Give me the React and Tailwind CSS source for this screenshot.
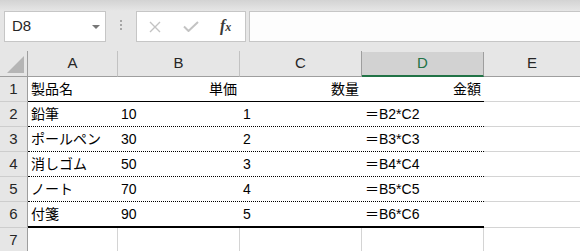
import React from 'react';

const rows = [
    { n: 1, a: '製品名', b: '単価', c: '数量', d: '金額', head: true, border: 'border-b border-black' },
    { n: 2, a: '鉛筆', b: '10', c: '1', d: '＝B2*C2', border: 'border-b border-dotted border-black' },
    { n: 3, a: 'ポールペン', b: '30', c: '2', d: '＝B3*C3', border: 'border-b border-dotted border-black' },
    { n: 4, a: '消しゴム', b: '50', c: '3', d: '＝B4*C4', border: 'border-b border-dotted border-black' },
    { n: 5, a: 'ノート', b: '70', c: '4', d: '＝B5*C5', border: 'border-b border-dotted border-black' },
    { n: 6, a: '付箋', b: '90', c: '5', d: '＝B6*C6', border: 'border-b-2 border-black', tall: true },
];

function RowHead({ n, tall }) {
    return (
        <div className={`flex w-[28px] shrink-0 items-center justify-center border-r border-b border-r-[#9e9e9e] border-b-[#cdcdcd] bg-[#e6e6e6] text-[15px] text-[#262626] ${tall ? 'h-[26px]' : 'h-[25px]'}`}>
            {n}
        </div>
    );
}

export default function App() {
    return (
        <div
            className="h-[251px] w-[580px] overflow-hidden bg-[#e6e6e6] text-black"
            style={{ fontFamily: '"Liberation Sans", "Noto Sans CJK JP", sans-serif' }}
        >
            {/* Formula bar */}
            <div className="flex h-[51px] items-start bg-[linear-gradient(to_bottom,#d3d3d3_0px,#e6e6e6_11px)] pl-[4px] pt-[11px]">
                <div className="flex h-[31px] w-[102px] items-center justify-between border border-[#c6c6c6] bg-white pl-[7px] pr-[5px]">
                    <span className="text-[15px] text-[#262626]">D8</span>
                    <svg width="8" height="4" viewBox="0 0 8 4">
                        <polygon points="0,0 8,0 4,4" fill="#777" />
                    </svg>
                </div>
                <div className="flex w-[30px] flex-col items-center gap-[2px] pt-[9px]">
                    <span className="h-[2px] w-[2px] bg-[#a6a6a6]" />
                    <span className="h-[2px] w-[2px] bg-[#a6a6a6]" />
                    <span className="h-[2px] w-[2px] bg-[#a6a6a6]" />
                </div>
                <div className="flex h-[31px] w-[110px] items-center border border-[#c6c6c6] bg-white">
                    <svg className="ml-[12px]" width="12" height="12" viewBox="0 0 12 12">
                        <path d="M1 1 L11 11 M11 1 L1 11" stroke="#c3c3c3" strokeWidth="1.4" fill="none" />
                    </svg>
                    <svg className="ml-[22px]" width="16" height="11" viewBox="0 0 16 11">
                        <path d="M1 5.5 L5.5 10 L15 1" stroke="#c3c3c3" strokeWidth="2" fill="none" />
                    </svg>
                    <span
                        className="ml-[21px] pb-[1px] text-[16px] font-semibold italic leading-none text-[#3a3a3a]"
                        style={{ fontFamily: '"Liberation Serif", serif' }}
                    >
                        f<span className="text-[12px]">x</span>
                    </span>
                </div>
                <div className="ml-[3px] h-[31px] flex-1 border-y border-l border-[#c6c6c6] bg-[#fdfdfd]" />
            </div>

            {/* Column headers */}
            <div className="flex h-[26px] text-[15px] text-[#262626]">
                <div className="relative w-[28px] shrink-0 border-r border-b border-[#9e9e9e]">
                    <svg className="absolute left-[7px] top-[5px]" width="17" height="17" viewBox="0 0 17 17">
                        <polygon points="17,0 17,17 0,17" fill="#b5b5b5" />
                    </svg>
                </div>
                <div className="flex w-[90px] shrink-0 items-center justify-center border-r border-b border-r-[#c2c2c2] border-b-[#9e9e9e]">A</div>
                <div className="flex w-[122px] shrink-0 items-center justify-center border-r border-b border-r-[#c2c2c2] border-b-[#9e9e9e]">B</div>
                <div className="flex w-[122px] shrink-0 items-center justify-center border-r border-b border-r-[#9e9e9e] border-b-[#9e9e9e]">C</div>
                <div className="mt-[1px] flex w-[122px] shrink-0 items-center justify-center border-r border-b-2 border-r-[#9e9e9e] border-b-[#217346] bg-[#d2d2d2] text-[#217346]">D</div>
                <div className="flex flex-1 items-center justify-center border-b border-[#9e9e9e]">E</div>
            </div>

            {/* Rows */}
            {rows.map((r) => (
                <div key={r.n} className="flex text-[14px]">
                    <RowHead n={r.n} tall={r.tall} />
                    <div className={`flex shrink-0 bg-white ${r.border} ${r.tall ? 'h-[26px]' : 'h-[25px]'}`}>
                        <div className="flex w-[90px] items-center pl-[3px] pt-[1px]">{r.a}</div>
                        <div className={`flex w-[122px] items-center pt-[1px] ${r.head ? 'justify-end pr-[3px]' : 'pl-[3px]'}`}>{r.b}</div>
                        <div className={`flex w-[122px] items-center pt-[1px] ${r.head ? 'justify-end pr-[3px]' : 'pl-[3px]'}`}>{r.c}</div>
                        <div className={`flex w-[122px] items-center pt-[1px] ${r.head ? 'justify-end pr-[3px]' : 'pl-[3px]'}`}>{r.d}</div>
                    </div>
                    <div className={`flex-1 border-b border-[#d4d4d4] bg-white ${r.tall ? 'h-[26px]' : 'h-[25px]'}`} />
                </div>
            ))}

            {/* Row 7 */}
            <div className="flex text-[14px]">
                <RowHead n={7} />
                <div className="h-[25px] w-[90px] shrink-0 border-r border-b border-[#d4d4d4] bg-white" />
                <div className="h-[25px] w-[122px] shrink-0 border-r border-b border-[#d4d4d4] bg-white" />
                <div className="h-[25px] w-[122px] shrink-0 border-r border-b border-[#d4d4d4] bg-white" />
                <div className="h-[25px] w-[122px] shrink-0 border-r border-b border-[#d4d4d4] bg-white" />
                <div className="h-[25px] flex-1 border-b border-[#d4d4d4] bg-white" />
            </div>
        </div>
    );
}
